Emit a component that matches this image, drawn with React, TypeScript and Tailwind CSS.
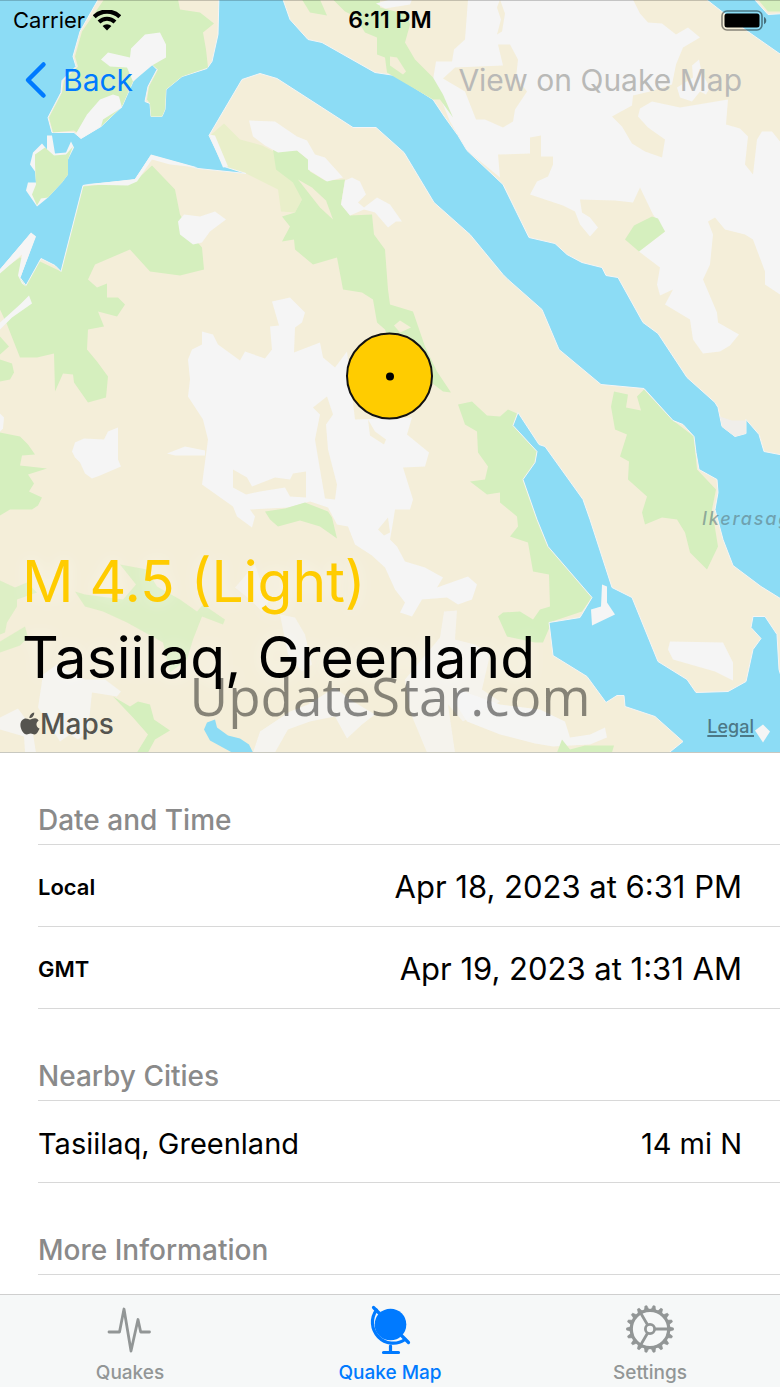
import React, { useState } from 'react';

const WATER = '#8cdcf5';
const SAND = '#f4eed9';
const GREEN = '#d5efbe';
const SNOW = '#f5f5f5';

type Shape = { fill: string; points: string; edge?: boolean; opacity?: number };

const shapes: Shape[] = [
  // vegetation and snow on the western land
  { fill: GREEN, points: '0,272 20,258 40,262 61,272 83,187 135,182 152,166 175,190 180,215 195,240 202,248 204,270 180,276 150,272 130,250 95,265 88,280 97,288 107,284 107,298 118,298 125,305 117,317 98,312 104,327 88,330 87,350 97,362 108,377 106,398 88,403 74,383 73,375 63,374 55,392 54,354 37,358 20,358 7,325 0,310' },
  { fill: SNOW, points: '0,323 20,305 29,296 32,304 12,318 0,330' },
  { fill: GREEN, points: '0,337 9,347 0,355' },
  { fill: GREEN, points: '0,360 12,364 14,373 10,380 0,382' },
  { fill: SNOW, points: '0,414 4,418 3,429 0,432' },
  { fill: GREEN, points: '0,433 20,437 28,445 35,455 22,456 20,466 47,469 28,475 34,484 29,492 42,498 38,506 32,510 10,510 0,516' },
  { fill: SNOW, points: '72,452 75,443 84,439 104,440 108,432 118,428 118,460 121,467 100,476 92,479 85,474 80,463 75,458' },
  { fill: SNOW, points: '178,222 184,215 200,217 215,212 226,220 210,232 202,243 193,245 180,235' },
  { fill: SNOW, points: '202,332 213,335 218,345 240,361 245,352 265,359 272,350 270,327 279,326 272,302 290,298 305,313 302,323 295,328 294,353 320,343 323,358 335,368 347,352 355,420 412,418 407,435 429,453 425,467 403,468 413,500 410,510 395,510 393,523 390,540 397,547 405,562 425,568 443,578 437,588 468,577 477,585 472,600 458,605 447,598 422,600 412,617 400,613 405,603 395,590 385,568 372,556 355,545 348,527 337,525 328,508 310,502 288,508 250,510 255,517 252,528 237,517 233,507 202,485 208,440 203,420 188,397 190,380 188,360 192,350 202,345' },
  { fill: SNOW, points: '167,454 185,447 205,451 205,456 175,456' },
  { fill: SAND, points: '313,408 327,397 333,415 326,425 328,450 337,485 335,500 325,499 320,470 315,440 320,415' },
  { fill: SAND, points: '233,470 247,478 252,487 275,478 290,480 293,474 306,472 306,498 290,497 285,488 260,492 246,495 233,488' },
  { fill: SAND, points: '368,420 375,432 386,440 384,445 370,436' },
  { fill: SAND, points: '378,530 388,518 390,533 384,536' },
  { fill: GREEN, points: '265,512 285,509 305,503 328,512 332,518 337,539 320,527 300,521 278,527 270,520' },

  // central valley
  { fill: '#e9efca', points: '209,137 224,124 240,140 262,146 285,158 300,185 302,200 295,213 281,212 278,190 246,174 224,167' },
  { fill: GREEN, points: '273,150 297,151 308,160 310,172 325,181 345,180 341,205 350,216 372,215 374,235 385,250 388,290 390,305 413,312 425,347 437,372 451,393 443,392 430,382 400,372 385,330 377,323 373,300 362,293 343,290 337,258 313,265 295,250 294,240 282,242 290,227 282,217 295,213 302,200 293,183 276,170' },
  { fill: SNOW, points: '249,121 275,122 297,137 307,141 315,155 325,158 343,178 327,182 308,170 308,160 297,151 278,153 265,146 253,137' },
  { fill: SNOW, points: '345,181 352,178 360,182 366,195 358,203 364,208 377,198 390,205 402,222 396,222 388,228 375,213 364,210 350,216 341,205' },
  { fill: SAND, points: '298,180 312,188 326,201 333,220 320,208' },
  { fill: SAND, points: '394,326 400,321 411,328 400,333' },

  // land along the eastern fjord
  { fill: GREEN, points: '458,405 472,402 487,416 500,417 508,410 517,414 513,426 537,452 535,463 523,480 537,520 548,547 592,598 582,612 552,622 543,643 535,643 507,637 498,617 503,613 520,612 533,620 540,610 550,607 549,575 533,572 528,543 510,537 518,527 517,517 500,503 500,493 487,495 470,482 485,480 488,467 478,453 477,432 465,425' },
  { fill: GREEN, points: '614,392 628,395 626,408 641,411 637,397 644,390 673,421 694,437 697,470 716,490 712,510 718,547 707,570 690,553 685,533 677,520 662,518 645,525 642,513 647,497 628,480 629,462 620,457 627,435 615,430 611,407' },
  { fill: SNOW, points: '670,642 723,643 733,663 733,681 715,672 673,660 668,650' },

  // north-east highlands
  { fill: SNOW, points: '468,0 633,0 640,14 648,23 662,24 676,35 688,28 700,38 683,48 676,65 672,85 650,92 633,96 632,106 612,117 622,127 632,144 645,152 662,158 665,140 648,128 638,117 640,109 652,102 680,108 728,100 726,125 740,129 748,137 745,165 753,175 757,140 762,132 772,132 780,142 780,295 765,285 765,272 753,240 745,235 725,230 715,218 708,222 713,235 710,265 703,280 717,313 718,323 739,335 730,346 720,352 703,354 693,340 690,320 665,305 673,290 660,296 657,285 660,268 639,252 665,232 653,215 640,188 633,203 615,201 580,200 582,213 590,218 598,228 590,237 580,225 575,212 563,206 530,195 537,182 548,177 553,165 553,157 541,157 541,136 530,138 530,154 498,155 500,178 467,151 450,122 433,80 436,62 452,62 454,50 465,40' },
  { fill: SAND, points: '500,0 505,14 502,32 497,35 501,20 497,8' },
  { fill: SAND, points: '498,45 510,45 518,60 516,78 527,92 515,110 513,122 503,128 485,120 476,120 465,92 443,79 455,68 503,66' },
  { fill: SNOW, points: '692,66 699,60 702,74 710,88 706,95 700,92 692,102 680,98 677,88 693,78' },
  { fill: GREEN, points: '625,240 634,226 652,217 658,219 665,232 652,242 639,252' },

  // fjords
  { fill: WATER, edge: true, points: '-5,-5 281,-5 283,0 290,20 308,40 322,43 375,73 395,76 433,100 445,118 458,136 467,151 503,185 529,238 555,244 567,255 582,263 602,268 606,276 618,278 643,323 658,334 687,378 715,403 718,408 722,427 735,437 746,434 746,420 759,435 764,452 790,457 790,605 761,587 733,566 723,540 715,510 718,493 717,480 699,470 696,453 694,437 683,425 673,421 644,389 601,385 559,350 542,310 508,280 503,275 470,235 434,203 404,153 376,128 353,128 277,79 260,74 242,80 209,136 224,167 246,174 198,169 151,156 135,180 83,186 61,272 55,266 41,259 26,286 20,278 35,237 31,234 -5,276' },
  { fill: WATER, edge: true, points: '518,413 539,445 545,447 583,500 590,520 612,588 632,598 658,662 687,680 696,693 728,692 746,682 753,650 761,639 751,628 753,617 765,617 777,635 779,670 785,690 785,760 663,758 683,742 655,717 625,707 624,696 617,696 606,703 587,677 553,656 549,623 580,618 592,598 548,547 537,520 523,480 535,463 537,452 513,426' },
  { fill: WATER, edge: true, points: '700,-5 750,-5 768,15 785,14 785,58 745,30' },
  { fill: GREEN, points: '758,0 780,0 780,12 768,12' },
  { fill: '#f0eeea', points: '720,417 732,421 745,421 746,434 735,437 723,428' },
  { fill: SNOW, points: '0,270 31,233 36,237 20,279 26,287 22,284 18,276 22,255 0,274' },
  { fill: SNOW, points: '83,185 135,180 151,155 198,168 170,165 152,160 137,182 128,186' },
  { fill: SNOW, points: '209,135 215,136 228,167 223,168' },

  // north-west peninsula
  { fill: SAND, edge: true, points: '101,-5 219,-5 218,35 212,62 207,69 182,77 166,90 165,110 162,117 151,117 150,104 145,102 148,87 157,70 152,65 145,68 133,82 122,107 101,127 81,139 74,133 52,133 48,118 61,93 62,81 76,67 73,57 80,32' },
  { fill: GREEN, points: '104,0 178,0 180,10 200,13 214,24 203,33 206,50 208,68 182,77 166,90 165,110 162,117 151,117 150,104 147,100 149,87 158,70 152,65 133,82 122,107 101,127 81,136 74,131 53,133 49,118 62,93 64,81 78,67 75,57 82,32' },
  { fill: SNOW, points: '101,60 108,53 130,58 131,49 145,35 160,33 166,45 166,58 152,66 133,82 127,68 110,67' },
  { fill: SNOW, points: '113,95 119,97 122,108 103,120 101,127 81,139 76,134 87,115 100,100' },
  { fill: SNOW, points: '47,136 52,136 55,154 66,153 71,142 74,148 68,160 68,175 62,183 48,198 37,207 26,191 28,183 36,183 35,172 30,165 33,153 42,144 47,150' },
  { fill: GREEN, points: '45,148 54,156 66,155 73,147 68,160 68,175 62,183 48,198 41,199 37,206 32,195 36,185 35,165 35,155' },
  { fill: GREEN, points: '302,0 310,13 327,16 320,0' },
  { fill: GREEN, points: '333,0 380,0 380,8 407,15 410,25 405,43 415,60 433,78 443,95 453,118 440,100 433,100 397,79 387,73 385,58 377,55 377,38 365,33 355,17 345,12' },
  { fill: SNOW, points: '376,4 390,0 412,0 410,5 385,9' },
  { fill: SAND, points: '390,57 397,58 406,72 403,75 390,66' },

  // islets
  { fill: SNOW, points: '602,585 607,587 607,603 615,615 592,626 591,610 601,607' },
  { fill: SNOW, points: '763,725 770,732 763,743 755,731' },

  // lowlands behind the title
  { fill: GREEN, opacity: 0.75, points: '0,581 15,588 27,583 37,593 17,600 17,607 7,623 5,633 0,635' },
  { fill: GREEN, opacity: 0.75, points: '0,642 25,627 28,638 20,646 0,653' },
  { fill: GREEN, opacity: 0.75, points: '75,592 85,595 123,600 136,585 120,565 147,570 157,587 180,600 197,612 203,605 225,620 223,625 202,617 193,640 187,660 170,673 163,643 127,623 103,612 85,607' },
  { fill: SNOW, opacity: 0.8, points: '43,675 57,665 85,680 105,680 121,692 117,697 92,693 88,733 78,740 70,735 60,742 38,708' },
  { fill: SNOW, opacity: 0.8, points: '0,718 18,709 32,728 36,753 25,753 24,737 0,730' },
  { fill: GREEN, points: '113,697 130,707 138,702 150,705 154,720 170,731 155,740 148,753 137,753 148,735 133,718' },
  { fill: SNOW, opacity: 0.6, points: '255,565 262,585 270,600 262,612 250,600 235,588' },
  { fill: SNOW, opacity: 0.7, points: '280,615 295,618 305,635 312,665 302,672 288,655' },
  { fill: SNOW, opacity: 0.8, points: '335,688 350,700 375,715 362,725 347,739 335,717 310,722 288,730 275,753 253,753 260,732 290,712 308,705' },
  { fill: SNOW, opacity: 0.7, points: '444,612 457,611 455,640 475,645 490,655 482,690 500,702 463,722 448,705 455,753 427,753 410,712 405,680 430,650 440,638' },
  { fill: SNOW, opacity: 0.9, points: '458,690 500,705 540,710 565,722 570,738 590,735 605,728 607,738 590,745 553,747 535,744 500,735 467,722 456,705' },
  { fill: GREEN, points: '562,740 570,750 585,746 614,746 612,753 557,753' },
  { fill: WATER, points: '204,730 207,723 215,720 217,728 228,736 240,739 249,745 253,753 232,753 210,741' },
];

const TerrainMap = () => (
  <svg
    className="absolute inset-0 h-full w-full"
    viewBox="0 0 780 753"
    preserveAspectRatio="xMidYMid slice"
    aria-hidden="true"
  >
    <rect width="780" height="753" fill={SAND} />
    {shapes.map((shape, i) => (
      <polygon
        key={i}
        points={shape.points}
        fill={shape.fill}
        opacity={shape.opacity ?? 1}
        stroke={shape.edge ? SNOW : 'none'}
        strokeWidth={shape.edge ? 1 : 0}
      />
    ))}
    <circle cx="389.5" cy="376.5" r="42.5" fill="#ffcc00" stroke="#111111" strokeWidth="2" />
    <circle cx="390" cy="377" r="4" fill="#000000" />
  </svg>
);

const WifiIcon = () => (
  <svg width="28" height="21" viewBox="0 0 28 21" fill="none" stroke="#000" aria-hidden="true">
    <path d="M1.2 6.800a18.2 18.2 0 0 1 25.6 0" strokeWidth="4.200" />
    <path d="M6 12a11.4 11.4 0 0 1 16 0" strokeWidth="4" />
    <path d="M14 20.500l-4.400-4.400a6.300 6.300 0 0 1 8.800 0z" fill="#000" stroke="none" />
  </svg>
);

const BatteryIcon = () => (
  <svg width="46" height="22" viewBox="0 0 46 22" aria-hidden="true">
    <rect x="1" y="1" width="40" height="19" rx="5" fill="none" stroke="#000" strokeOpacity="0.45" strokeWidth="1.6" />
    <rect x="3.5" y="3.5" width="35" height="14" rx="2.5" fill="#000" />
    <path d="M43 7c3 1.200 3 6 0 7.200z" fill="#000" fillOpacity="0.5" />
  </svg>
);

const AppleIcon = () => (
  <svg width="20" height="24" viewBox="0 0 20 24" fill="#55544f" aria-hidden="true">
    <path d="M14.200 0.500c.2 1.500-.4 2.900-1.300 3.900-.9 1.100-2.200 1.800-3.500 1.700-.2-1.400.5-2.800 1.300-3.700C11.600 1.300 13.100.6 14.200.5z" />
    <path d="M18.600 8.700c-3.200 2-2.700 6.400.9 7.800-.8 2.200-2.600 5.900-4.800 6-1.600.1-2.200-1-4-1s-2.500 1-4 1C3.800 22.500.4 17.300.4 12.900c0-4.300 2.800-6.500 5.400-6.500 1.800 0 3.300 1.100 4.400 1.100s2.900-1.300 5-1.200c1.200.1 2.500.6 3.400 2.400z" />
  </svg>
);

const QuakesIcon = () => (
  <svg width="48" height="48" viewBox="0 0 48 48" fill="none" stroke="currentColor" strokeWidth="2.800" strokeLinecap="round" strokeLinejoin="round" aria-hidden="true">
    <path d="M3 27h10.500l4.500-23 7 42L32 14.500l2.700 12.500H43.500" />
  </svg>
);

const GlobeIcon = () => (
  <svg width="48" height="50" viewBox="0 0 48 50" fill="none" stroke="currentColor" strokeLinecap="round" aria-hidden="true">
    <circle cx="24.500" cy="19.500" r="15.800" fill="currentColor" stroke="none" />
    <path d="M10.500 5A20.800 20.800 0 0 0 39 34.500" strokeWidth="3.200" />
    <path d="M7.500 2.500l7 7M35.500 30.500l7 7" strokeWidth="3.200" />
    <path d="M24.500 41v6M17.500 47.500h15" strokeWidth="3.200" />
  </svg>
);

const teeth = Array.from({ length: 18 }, (_, i) => i * 20);

const GearIcon = () => (
  <svg width="48" height="48" viewBox="0 0 48 48" fill="none" stroke="currentColor" aria-hidden="true">
    {teeth.map((angle) => (
      <path key={angle} d="M21.800 4.500l1.200-4h2l1.200 4z" fill="currentColor" stroke="currentColor" strokeWidth="0.600" transform={`rotate(${angle + 10} 24 24)`} />
    ))}
    <circle cx="24" cy="24" r="18.700" strokeWidth="3.200" />
    <circle cx="24" cy="24" r="4.600" strokeWidth="2.800" />
    <path d="M29 24h13.500M21.500 19.700L14.500 7.800M21.500 28.300L14.500 40.200" strokeWidth="2.800" />
  </svg>
);

const SectionTitle = ({ children }: { children: React.ReactNode }) => (
  <h2 className="ml-[38px] flex h-[92px] items-end border-b border-[#d8d8d8] pb-2 text-[28px] leading-8 font-medium text-[#8a8a8a]">
    {children}
  </h2>
);

const Row = ({ label, value, small }: { label: string; value: string; small?: boolean }) => (
  <div className="ml-[38px] flex h-[82px] items-center justify-between border-b border-[#d8d8d8] pt-1 pr-[38px]">
    <dt className={small ? 'text-[22px] font-semibold' : 'text-[29px]'}>{label}</dt>
    <dd className={small ? 'text-[31px]' : 'text-[29px]'}>{value}</dd>
  </div>
);

const tabs = [
  { name: 'Quakes', icon: <QuakesIcon /> },
  { name: 'Quake Map', icon: <GlobeIcon /> },
  { name: 'Settings', icon: <GearIcon /> },
];

function App() {
  const [activeTab, setActiveTab] = useState('Quake Map');

  return (
    <div className="flex h-screen flex-col overflow-hidden bg-white font-['Inter',sans-serif] text-black">
      <main className="min-h-0 flex-1 overflow-hidden">
        <section className="relative flex aspect-[780/753] w-full flex-col justify-between overflow-hidden border-b border-[#c8c8c0]">
          <TerrainMap />

          <header className="relative">
            <div className="grid h-10 grid-cols-[1fr_auto_1fr] items-center border-t border-black/20 px-[13px] text-[22px]">
              <div className="flex items-center gap-2">
                Carrier
                <WifiIcon />
              </div>
              <time className="text-[23px] font-semibold">6:11 PM</time>
              <div className="flex justify-end">
                <BatteryIcon />
              </div>
            </div>
            <nav className="flex h-20 items-center justify-between pr-[38px] pl-6 text-[30px]">
              <button className="flex items-center gap-4 text-[#007aff]">
                <svg width="23" height="38" viewBox="0 0 23 38" fill="none" stroke="currentColor" strokeWidth="4.500" strokeLinecap="round" strokeLinejoin="round" aria-hidden="true">
                  <path d="M19.500 3.500L4 19l15.500 15.500" />
                </svg>
                Back
              </button>
              <button disabled className="text-[#b9b9b7]">
                View on Quake Map
              </button>
            </nav>
          </header>

          <span className="absolute top-[505px] left-[702px] text-[18px] font-medium tracking-widest text-[#5c7a80]/60 italic">
            Ikerasagssuaq
          </span>

          <div className="relative pb-2">
            <h1 className="pl-[22px] text-[57px] leading-[76px] [text-shadow:0_0_16px_rgb(255_255_255/0.5)]">
              <span className="block text-[#ffcc00]">M 4.5 (Light)</span>
              <span className="block">Tasiilaq, Greenland</span>
            </h1>
            <div className="flex items-center justify-between pt-2 pr-[26px] pl-5">
              <div className="flex items-center text-[28px] leading-10 font-medium text-[#55544f]">
                <AppleIcon />
                Maps
              </div>
              <a href="#legal" className="pt-1 text-[18px] font-medium text-[#4c7886] underline decoration-2 underline-offset-2">
                Legal
              </a>
            </div>
          </div>

          <span className="absolute top-[658px] left-0 w-full text-center font-['Open_Sans',sans-serif] text-[53px] leading-[76px] text-black/45">
            UpdateStar.com
          </span>
        </section>

        <SectionTitle>Date and Time</SectionTitle>
        <dl>
          <Row label="Local" value="Apr 18, 2023 at 6:31 PM" small />
          <Row label="GMT" value="Apr 19, 2023 at 1:31 AM" small />
        </dl>
        <SectionTitle>Nearby Cities</SectionTitle>
        <dl>
          <Row label="Tasiilaq, Greenland" value="14 mi N" />
        </dl>
        <SectionTitle>More Information</SectionTitle>
      </main>

      <nav className="grid h-[93px] shrink-0 grid-cols-3 border-t border-[#cfcfcf] bg-[#f6f8f8]">
        {tabs.map((tab) => (
          <button
            key={tab.name}
            onClick={() => setActiveTab(tab.name)}
            className={`flex flex-col items-center justify-between pt-2.5 pb-0.5 text-[19px] leading-6 font-medium ${
              activeTab === tab.name ? 'text-[#007aff]' : 'text-[#929696]'
            }`}
          >
            {tab.icon}
            {tab.name}
          </button>
        ))}
      </nav>
    </div>
  );
}

export default App;
